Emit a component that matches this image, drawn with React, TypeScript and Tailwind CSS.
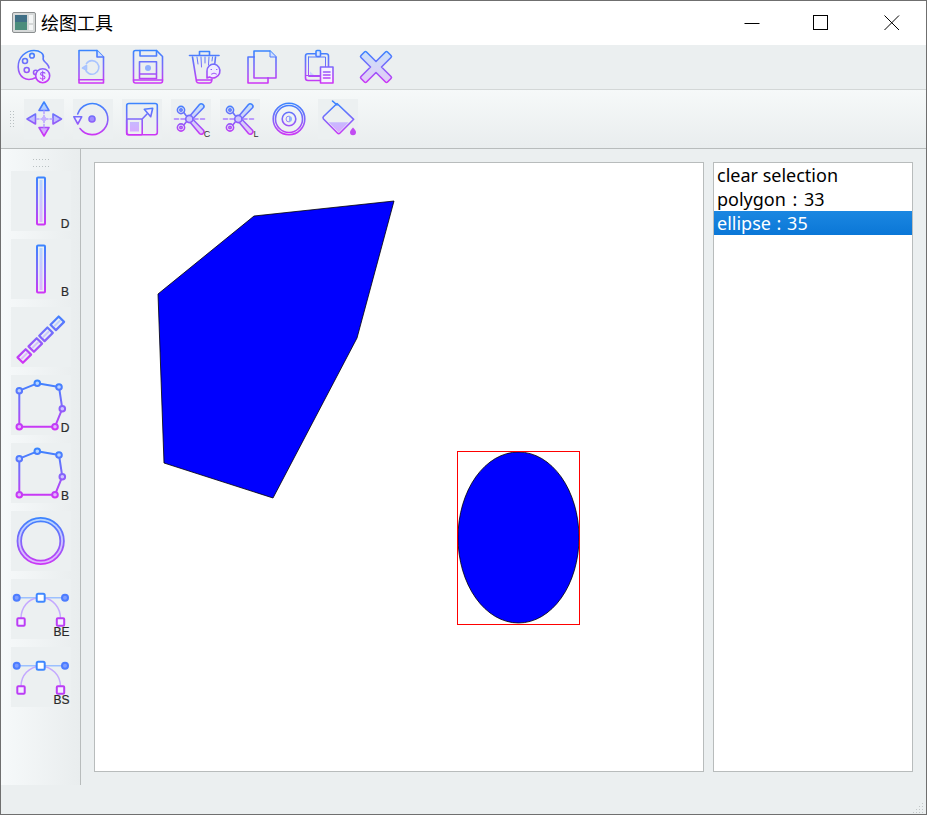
import type { ReactNode } from 'react'

const S = 'url(#g40)'
const F = 'url(#f40)'
const S60 = 'url(#g60)'
const F60 = 'url(#f60)'

function Icon({ children, tile }: { children: ReactNode; tile?: boolean }) {
  return (
    <svg
      width="40"
      height="40"
      viewBox="0 0 40 40"
      fill="none"
      stroke={S}
      strokeWidth="1.6"
      strokeLinejoin="round"
      strokeLinecap="round"
      className={tile ? 'shrink-0 bg-[#ecf0f1]' : 'shrink-0'}
    >
      {children}
    </svg>
  )
}

function Tile({ children, label, labelX = 54 }: { children: ReactNode; label?: string; labelX?: number }) {
  return (
    <svg
      width="60"
      height="60"
      viewBox="0 0 60 60"
      fill="none"
      stroke={S60}
      strokeWidth="2"
      strokeLinejoin="round"
      strokeLinecap="round"
      className="shrink-0 bg-[#ecf0f1]"
    >
      {children}
      {label && (
        <text
          x={labelX}
          y="57"
          textAnchor="middle"
          fontSize="12"
          fill="#2a2a2a"
          stroke="#2a2a2a"
          strokeWidth="0.2"
          fontFamily="'Liberation Sans', sans-serif"
        >
          {label}
        </text>
      )}
    </svg>
  )
}

function Scissors({ letter }: { letter: string }) {
  return (
    <Icon tile>
      <path d="M3.5 20H36" strokeDasharray="4 2.5" stroke="#a97cff" />
      <path d="M19.5 16.3L28.5 5.5Q30 4 32 5.5Q33.8 7 32.5 8.8L22.5 19" fill={F} fillOpacity="0.6" />
      <path d="M19.5 23.7L28.5 34.5Q30 36 32 34.5Q33.8 33 32.5 31.2L22.5 21" fill={F} fillOpacity="0.6" />
      <circle cx="18.3" cy="20" r="3.6" fill="#cfc4ff" />
      <circle cx="10" cy="11" r="3.6" />
      <circle cx="10" cy="11" r="1.2" />
      <circle cx="10" cy="28.5" r="3.6" />
      <circle cx="10" cy="28.5" r="1.2" />
      <path d="M12.8 13.5L15.6 17.3M12.8 26L15.6 22.6" />
      <text x="36" y="38" textAnchor="middle" fontSize="9" fill="#333" stroke="none" fontFamily="'Liberation Sans', sans-serif">
        {letter}
      </text>
    </Icon>
  )
}

function BarIcon({ label }: { label: string }) {
  return (
    <Tile label={label}>
      <rect x="26" y="6.5" width="8" height="47" rx="1" />
      <rect x="28.5" y="9" width="3" height="42" fill={F60} stroke="none" />
    </Tile>
  )
}

function PolyIcon({ label }: { label: string }) {
  const pts = [
    [8.3, 15.7],
    [26.3, 8.3],
    [48, 12],
    [51.3, 33.7],
    [44, 51.7],
    [8.3, 51.7],
  ]
  return (
    <Tile label={label}>
      <polygon points={pts.map((p) => p.join(',')).join(' ')} />
      {pts.map((p, i) => (
        <circle key={i} cx={p[0]} cy={p[1]} r="2.8" fill={F60} />
      ))}
    </Tile>
  )
}

function CurveIcon({ label, d }: { label: string; d: string }) {
  return (
    <Tile label={label} labelX={50.5}>
      <path d="M5.7 18.7H54" stroke="#9cc0ff" strokeWidth="1.5" />
      <path d={d} stroke="#c4a9ff" strokeWidth="1.5" />
      <circle cx="5.7" cy="18.7" r="3" fill="#7f9dff" stroke="#4d7dff" />
      <circle cx="54" cy="18.7" r="3" fill="#7f9dff" stroke="#4d7dff" />
      <rect x="25.7" y="14.7" width="8" height="8" rx="1.5" fill="#fff" stroke="#3f87ff" strokeWidth="2" />
      <rect x="6.3" y="39.3" width="7.4" height="7.4" rx="1" fill="#f4f0ff" stroke="#bb3df5" />
      <rect x="45.8" y="39.3" width="7.4" height="7.4" rx="1" fill="#f4f0ff" stroke="#bb3df5" />
    </Tile>
  )
}

// one link of the chain, written out so the gradient stays in icon space
function link(cx: number, cy: number) {
  const u = 4.1
  const v = 2.7
  return `M${cx - u - v} ${cy + u - v}L${cx + u - v} ${cy - u - v}L${cx + u + v} ${cy - u + v}L${cx - u + v} ${cy + u + v}Z`
}

const topIcons = [
  <Icon key="palette">
    <path d="M22 30.5C12 35.5 4.5 30 4.2 20C4 10 12 3.5 20 3.5C26 3.5 30.5 7 29.2 11C28.3 14 32 15 33.8 18C34.6 19.2 35 20 35 21" />
    <circle cx="18" cy="8.7" r="2.3" />
    <circle cx="11" cy="14" r="2.5" />
    <circle cx="12.7" cy="23" r="2.5" />
    <circle cx="21.7" cy="25.5" r="2.2" />
    <circle cx="28.7" cy="28.7" r="7" fill="#f0ecff" />
    <path d="M31 26.2C30 25 26.5 25 26.5 27C26.5 29.2 31 28 31 30.4C31 32.5 27.5 32.5 26.3 31M28.7 24V33.5" strokeWidth="1.1" />
  </Icon>,
  <Icon key="doc">
    <path d="M8 3.5H26L32.5 10V36H8Z" />
    <path d="M26 3.5V10H32.5" fill="#cfe0ff" />
    <path d="M8 32.8H32.5" />
    <path d="M15.4 16.6A6.8 6.8 0 1 1 14.3 21.5" stroke="#a9c4ff" />
    <path d="M11.5 21L15.5 18.5V23Z" fill="#b9ccff" stroke="#a9c4ff" />
  </Icon>,
  <Icon key="save">
    <path d="M5.5 5.5Q5.5 3.5 7.5 3.5H28.5L34.5 9.5V34Q34.5 36 32.5 36H7.5Q5.5 36 5.5 34Z" />
    <path d="M12 3.5V9H28.5V3.5" />
    <path d="M11.5 14.7H28.5V31.5H11.5ZM11.5 27H28.5" />
    <path d="M5.5 33H34.5" />
    <circle cx="20" cy="21" r="3" fill="#8fb0ff" stroke="none" />
  </Icon>,
  <Icon key="trash">
    <path d="M4.5 8.5H34" />
    <path d="M14.5 8V4.5H24.5V8" />
    <path d="M7.5 10L11.5 34.5Q12 36 14 36H24.5Q26 36 26.5 34.5L27 32" />
    <path d="M30.5 10L29.8 16.5" />
    <path d="M12 10L13 17M16 10L16.5 20M20 10V16M24 10L23.5 18M27.5 10L27 14" strokeWidth="1" />
    <path d="M12 33H26" />
    <path d="M29 17A7 7 0 1 1 24.5 30L22 31V24A7 7 0 0 1 29 17Z" fill="#f0ecff" />
    <path d="M26 22.5H26.6M31.5 22.5H32M26.5 27Q29 25 31.5 27" strokeWidth="1" />
  </Icon>,
  <Icon key="copy">
    <path d="M12 10V4H28L34 10V31H26" />
    <path d="M28 4V10H34" strokeWidth="1" fill="#cfe0ff" />
    <path d="M12 10H6V36H26V31" />
    <path d="M12 10V31H26" />
  </Icon>,
  <Icon key="clip">
    <path d="M21 33.5H9Q6.5 33.5 6.5 31V9Q6.5 6.8 9 6.8H27Q29.5 6.8 29.5 9V20" />
    <path d="M9.5 10H26.5V20M21 29.5H9.5V10" strokeWidth="1" />
    <path d="M6.5 28.5H21" strokeWidth="1" />
    <rect x="17" y="3.5" width="4.5" height="6" rx="1" fill="#d9e6ff" />
    <path d="M11 24.5V28H15Z" fill="#c9d3ff" stroke="none" />
    <rect x="21.5" y="20" width="12.5" height="16" fill="#f7f2ff" />
    <path d="M24.5 25H31M24.5 28H31M24.5 31H31" />
  </Icon>,
  <Icon key="close">
    <path
      d="M10.5 5L20 14.5L29.5 5Q30.5 4 31.5 5L35 8.5Q36 9.5 35 10.5L25.5 20L35 29.5Q36 30.5 35 31.5L31.5 35Q30.5 36 29.5 35L20 25.5L10.5 35Q9.5 36 8.5 35L5 31.5Q4 30.5 5 29.5L14.5 20L5 10.5Q4 9.5 5 8.5L8.5 5Q9.5 4 10.5 5Z"
      fill={F}
      fillOpacity="0.5"
    />
  </Icon>,
]

export default function App() {
  return (
    <div className="flex h-[815px] w-[927px] flex-col overflow-hidden border border-[#6f6f6f] bg-[#ebeff0] font-['Noto_Sans','Noto_Sans_CJK_SC',sans-serif] text-black">
      <svg width="0" height="0" className="absolute">
        <defs>
          <linearGradient id="g40" gradientUnits="userSpaceOnUse" x1="0" y1="4" x2="0" y2="36">
            <stop offset="0" stopColor="#3a85ff" />
            <stop offset="0.5" stopColor="#7f68fb" />
            <stop offset="1" stopColor="#cf35f5" />
          </linearGradient>
          <linearGradient id="f40" gradientUnits="userSpaceOnUse" x1="0" y1="4" x2="0" y2="36">
            <stop offset="0" stopColor="#a8d6ff" />
            <stop offset="1" stopColor="#dca6ff" />
          </linearGradient>
          <linearGradient id="g60" gradientUnits="userSpaceOnUse" x1="0" y1="6" x2="0" y2="54">
            <stop offset="0" stopColor="#3a85ff" />
            <stop offset="0.5" stopColor="#7f68fb" />
            <stop offset="1" stopColor="#cf35f5" />
          </linearGradient>
          <linearGradient id="f60" gradientUnits="userSpaceOnUse" x1="0" y1="6" x2="0" y2="54">
            <stop offset="0" stopColor="#b5d8ff" />
            <stop offset="1" stopColor="#e3b4ff" />
          </linearGradient>
        </defs>
      </svg>

      {/* title bar */}
      <div className="flex h-[44px] shrink-0 items-center bg-white">
        <svg width="24" height="21" viewBox="0 0 24 21" className="ml-[11px] mt-[-1px]">
          <rect x="0.5" y="0.5" width="23" height="20" rx="1.5" fill="#d6d9d9" stroke="#8b8f90" />
          <rect x="3" y="3" width="12" height="15" fill="#4c8d7c" />
          <rect x="3" y="3" width="12" height="7" fill="#3f6f86" />
          <rect x="17" y="3" width="4" height="8" fill="#f4f6f6" />
          <rect x="17" y="13" width="4" height="5" fill="#f4f6f6" />
        </svg>
        <span className="ml-[5px] mt-[-1px] text-[18px] leading-none">绘图工具</span>
        <div className="ml-auto flex items-center">
          <svg width="16" height="16" viewBox="0 0 16 16" stroke="#000" fill="none" className="mr-[53px]">
            <path d="M0.5 8.5H15.5" />
          </svg>
          <svg width="16" height="16" viewBox="0 0 16 16" stroke="#000" fill="none" className="mr-[55px]">
            <rect x="0.5" y="0.5" width="14" height="14" />
          </svg>
          <svg width="16" height="16" viewBox="0 0 16 16" stroke="#000" fill="none" className="mr-[26px]">
            <path d="M0.5 0.5L15 15M15 0.5L0.5 15" />
          </svg>
        </div>
      </div>

      {/* file toolbar */}
      <div className="flex h-[45px] shrink-0 items-center gap-[17px] border-b border-[#d3d7d7] bg-[#ebeff0] pl-[13px]">
        {topIcons}
      </div>

      {/* tool toolbar */}
      <div className="flex h-[59px] shrink-0 items-center border-b border-[#b8bcbc] bg-gradient-to-b from-[#f6f9f9] to-[#e9edee]">
        <div className="ml-[9px] grid grid-cols-2 gap-x-[2px] gap-y-[2px]">
          {Array.from({ length: 12 }).map((_, i) => (
            <span key={i} className="h-[1px] w-[1px] bg-[#b9c0c2]" />
          ))}
        </div>
        <div className="ml-[10px] flex gap-[9px]">
          <Icon tile>
            <path d="M20 3L25 11.5H15Z" fill={F} />
            <path d="M20 37L25 28.5H15Z" fill={F} />
            <path d="M3 20L11.5 15V25Z" fill={F} />
            <path d="M37.5 20L29 15V25Z" fill={F} />
            <path d="M20 12V28M12.5 20H28" strokeDasharray="2.5 2" stroke="#b9a4ff" />
            <circle cx="20" cy="20" r="2.4" fill="#c5b2ff" stroke="none" />
          </Icon>
          <Icon tile>
            <path d="M4.7 15A15.5 15.5 0 1 1 7 29.5" />
            <path d="M0.9 17.8H8.7L4.8 25Z" fill="#f2ecff" />
            <circle cx="19" cy="20" r="3" fill="#9f8dff" />
          </Icon>
          <Icon tile>
            <path d="M20 4.5H33Q35.3 4.5 35.3 6.5V33.5Q35.3 35.7 33 35.7H7Q4.7 35.7 4.7 33.5V6.5Q4.7 4.5 7 4.5Z" />
            <rect x="4.7" y="20" width="15.5" height="15.7" rx="1" />
            <rect x="8" y="23" width="9" height="9.5" fill={F} stroke="none" />
            <path d="M20.2 20L25 15" />
            <path d="M22.3 10.3L30.7 9.3L28.7 17.7Z" fill="#f2ecff" />
          </Icon>
          <Scissors letter="C" />
          <Scissors letter="L" />
          <Icon>
            <circle cx="20" cy="20" r="15.8" />
            <circle cx="20" cy="20" r="13.5" />
            <circle cx="20" cy="20" r="6.8" />
            <path d="M20 17A3 3 0 0 1 20 23Z" fill="#8fb0ff" stroke="none" />
            <path d="M20 17A3 3 0 0 0 20 23" strokeWidth="0.8" />
          </Icon>
          <Icon tile>
            <path d="M14.5 2L19 6" />
            <path d="M19 4.5L35.7 20.3L22 34Q20.7 35.3 19.4 34L5.5 20Q4.5 18.5 5.5 17.5Z" />
            <path d="M10.7 23.3H30.7L20.7 33.5Z" fill={F} stroke="none" />
            <path d="M35 28.5C37 31 38 32 38 33.3A3 3 0 0 1 32 33.3C32 32 33 31 35 28.5Z" fill="#c24cf2" stroke="none" />
          </Icon>
        </div>
      </div>

      {/* body */}
      <div className="flex h-[636px] shrink-0">
        <div className="flex w-[80px] shrink-0 flex-col items-start border-r border-[#b8bcbc] bg-gradient-to-r from-[#f6f9fa] to-[#e9edee] pl-[10px]">
          <div className="mt-[10px] ml-[22px] grid h-[12px] grid-cols-6 gap-x-[2px] gap-y-[2px]">
            {Array.from({ length: 12 }).map((_, i) => (
              <span key={i} className="h-[1px] w-[1px] bg-[#b9c0c2]" />
            ))}
          </div>
          <div className="flex flex-col gap-[8px]">
            <BarIcon label="D" />
            <BarIcon label="B" />
            <Tile>
              {[
                [46.3, 16.3],
                [35, 27.3],
                [24.3, 38],
                [13.3, 49],
              ].map(([x, y], i) => (
                <g key={i}>
                  <path d={link(x, y)} strokeWidth="2.2" />
                  <path d={`M${x - 2.5} ${y + 2.5}L${x + 2.5} ${y - 2.5}`} stroke={F60} strokeWidth="2" />
                </g>
              ))}
            </Tile>
            <PolyIcon label="D" />
            <PolyIcon label="B" />
            <Tile>
              <circle cx="29.7" cy="30" r="21.5" stroke={F60} strokeWidth="4" />
              <circle cx="29.7" cy="30" r="23.2" strokeWidth="1.8" />
              <circle cx="29.7" cy="30" r="19.6" strokeWidth="1.8" />
            </Tile>
            <CurveIcon label="BE" d="M10 39.5C10 28 18 20 25.7 19M33.7 19C41 20 49.5 28 49.5 39.5" />
            <CurveIcon label="BS" d="M10 39.5C10 28 18 20 29.7 18.7C41 20 49.5 28 49.5 39.5" />
          </div>
        </div>

        <div className="flex gap-[9px] pl-[13px] pt-[13px]">
          <div className="h-[610px] w-[610px] border border-[#b8bcbc] bg-white">
            <svg width="608" height="608" viewBox="95 163 608 608">
              <polygon points="254,216 394,201 357,338 273,498 164,463 158,294" fill="#0000ff" stroke="#000" strokeWidth="0.8" />
              <ellipse cx="518.5" cy="537.5" rx="60.5" ry="85.5" fill="#0000ff" stroke="#000" strokeWidth="0.8" />
              <rect x="457.5" y="451.5" width="122" height="173" fill="none" stroke="#ff0000" />
            </svg>
          </div>
          <div className="h-[610px] w-[200px] border border-[#b8bcbc] bg-white text-[18px] leading-[24px]">
            <div className="pl-[3px]">clear selection</div>
            <div className="pl-[3px] [word-spacing:2px]">polygon : 33</div>
            <div className="bg-gradient-to-b from-[#1b87e1] to-[#0a77d7] pl-[3px] text-white [word-spacing:1px]">ellipse : 35</div>
          </div>
        </div>
      </div>

      {/* status bar */}
      <div className="flex flex-1 items-end justify-end pb-[1px] pr-[2px]">
        <svg width="11" height="11" viewBox="0 0 11 11" fill="#c2c7c8">
          <rect x="9" y="1" width="1" height="1" />
          <rect x="6" y="4" width="1" height="1" />
          <rect x="9" y="4" width="1" height="1" />
          <rect x="3" y="7" width="1" height="1" />
          <rect x="6" y="7" width="1" height="1" />
          <rect x="9" y="7" width="1" height="1" />
          <rect x="0" y="10" width="1" height="1" />
          <rect x="3" y="10" width="1" height="1" />
          <rect x="6" y="10" width="1" height="1" />
          <rect x="9" y="10" width="1" height="1" />
        </svg>
      </div>
    </div>
  )
}
